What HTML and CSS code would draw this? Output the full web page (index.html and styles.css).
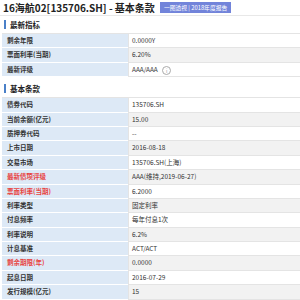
FILE: index.html
```html
<!DOCTYPE html>
<html>
<head>
<meta charset="utf-8">
<link rel="stylesheet" href="styles.css">
</head>
<body>
<div class="page">
  <div class="title-bar">
    <h1 class="title">16海航02[135706.SH] - 基本条款</h1>
    <span class="badge">一图透视 | 2018年度报告</span>
  </div>

  <div class="section-head"><span class="bar"></span>最新指标</div>
  <div class="table">
    <div class="row"><div class="label">剩余年限</div><div class="value">0.0000Y</div></div>
    <div class="row"><div class="label">票面利率(当期)</div><div class="value">6.20%</div></div>
    <div class="row"><div class="label">最新评级</div><div class="value">AAA/AAA <span class="info">i</span></div></div>
  </div>

  <div class="section-head second"><span class="bar"></span>基本条款</div>
  <div class="table big">
    <div class="row"><div class="label">债券代码</div><div class="value">135706.SH</div></div>
    <div class="row"><div class="label">当前余额(亿元)</div><div class="value">15.00</div></div>
    <div class="row"><div class="label">质押券代码</div><div class="value">--</div></div>
    <div class="row"><div class="label">上市日期</div><div class="value">2016-08-18</div></div>
    <div class="row"><div class="label">交易市场</div><div class="value">135706.SH(上海)</div></div>
    <div class="row"><div class="label red">最新债项评级</div><div class="value">AAA(维持,2019-06-27)</div></div>
    <div class="row"><div class="label red">票面利率(当期)</div><div class="value">6.2000</div></div>
    <div class="row"><div class="label">利率类型</div><div class="value">固定利率</div></div>
    <div class="row"><div class="label">付息频率</div><div class="value">每年付息1次</div></div>
    <div class="row"><div class="label">利率说明</div><div class="value">6.2%</div></div>
    <div class="row"><div class="label">计息基准</div><div class="value">ACT/ACT</div></div>
    <div class="row"><div class="label red">剩余期限(年)</div><div class="value">0.0000</div></div>
    <div class="row"><div class="label">起息日期</div><div class="value">2016-07-29</div></div>
    <div class="row"><div class="label">发行规模(亿元)</div><div class="value">15</div></div>
  </div>
</div>
</body>
</html>
```

FILE: styles.css
```css
html, body {
  margin: 0;
  padding: 0;
  background: #ffffff;
}
body {
  font-family: "Noto Sans CJK SC", "Noto Sans", sans-serif;
  color: #333333;
}
.page {
  width: 300px;
  height: 300px;
  overflow: hidden;
}
.title-bar {
  display: flex;
  align-items: center;
  height: 15px;
  padding-left: 3px;
  border-bottom: 1px solid #e8e8e8;
}
.title {
  margin: 0;
  font-size: 10px;
  font-weight: 700;
  color: #222222;
  line-height: 15px;
  white-space: nowrap;
}
.badge {
  margin-left: 5px;
  background: #7284da;
  color: #ffffff;
  font-size: 5.8px;
  line-height: 11px;
  height: 11px;
  padding: 0 4px;
  white-space: nowrap;
}
.section-head {
  display: flex;
  align-items: center;
  height: 17px;
  padding-left: 4px;
  font-size: 7.5px;
  font-weight: 700;
  color: #222222;
}
.section-head.second {
  margin-top: 3px;
}
.bar {
  width: 2px;
  height: 9px;
  background: #4a80c8;
  margin-right: 4px;
}
.table {
  margin-left: 2px;
  border-top: 1px solid #e4e4e4;
}
.row {
  display: flex;
  height: 13.4px;
  border-bottom: 1px solid #e4e4e4;
  font-size: 6.5px;
  line-height: 13.4px;
}
.label {
  width: 121px;
  flex: none;
  padding-left: 5px;
  background: #dde9f6;
  font-weight: 700;
  color: #333333;
  border-bottom: 1px solid #ffffff;
  margin-bottom: -1px;
  white-space: nowrap;
}
.label.red {
  color: #e8433f;
}
.value {
  flex: 1;
  padding-left: 3px;
  white-space: nowrap;
  border-left: 1px solid #e4e4e4;
}
.row:nth-child(even) .value {
  background: #f2f2f2;
}
.info {
  display: inline-flex;
  align-items: center;
  justify-content: center;
  width: 7px;
  height: 7px;
  border: 1px solid #aaaaaa;
  border-radius: 50%;
  color: #999999;
  font-size: 5px;
  line-height: 7px;
  margin-left: 3px;
  vertical-align: middle;
}
.big {
  border-bottom: 2px solid #8fb0dc;
}
```
